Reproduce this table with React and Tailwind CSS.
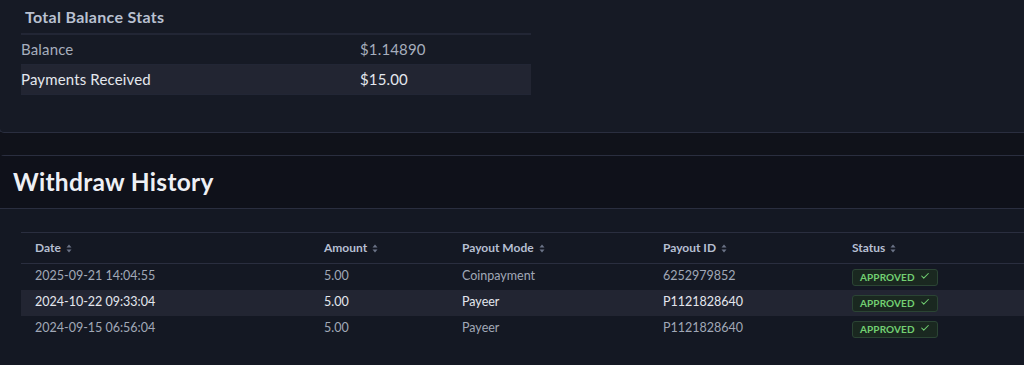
import React from 'react';
import { Check } from 'lucide-react';

const stats = [
  { label: 'Balance', value: '$1.14890' },
  { label: 'Payments Received', value: '$15.00' },
];

const withdrawals = [
  { date: '2025-09-21 14:04:55', amount: '5.00', mode: 'Coinpayment', id: '6252979852' },
  { date: '2024-10-22 09:33:04', amount: '5.00', mode: 'Payeer', id: 'P1121828640' },
  { date: '2024-09-15 06:56:04', amount: '5.00', mode: 'Payeer', id: 'P1121828640' },
];

const SortIcon = () => (
  <svg width="6" height="9" viewBox="0 0 6 9" className="ml-[5px] inline-block">
    <path d="M3 0.5 L5.5 3.5 H0.5 Z" fill="#6b7387" />
    <path d="M3 8.5 L5.5 5.5 H0.5 Z" fill="#6b7387" />
  </svg>
);

const cols = 'grid grid-cols-[289px_138px_201px_189px_1fr]';

const App = () => {
  return (
    <div className="w-[1024px] h-[365px] overflow-hidden bg-[#10121a] font-['Lato','Noto_Sans',sans-serif]">
      {/* Total Balance Stats card */}
      <div className="h-[133px] bg-[#161a25] border-b border-l border-[#2a2e3f] rounded-bl-[5px] -ml-px">
        <h3 className="pl-[25px] pt-[5px] h-[33px] text-[16px] font-bold tracking-[0.3px] text-[#b9c1d1]">Total Balance Stats</h3>
        <div className="ml-[21px] w-[510px] border-t-2 border-[#222635]">
          {stats.map((s, i) => (
            <div
              key={s.label}
              className={`grid grid-cols-[339px_1fr] h-[30px] items-center text-[15px] tracking-[0.15px] border-b border-[#222635] ${
                i % 2 === 1 ? 'bg-[#222532] text-[#e4e7ee]' : 'text-[#a6aebd]'
              }`}
            >
              <span>{s.label}</span>
              <span>{s.value}</span>
            </div>
          ))}
        </div>
      </div>

      {/* Withdraw History card */}
      <div className="mt-[22px] border-t border-l border-[#2a2e3f] rounded-tl-[5px] -ml-px">
        <div className="h-[53px] flex items-center pl-[13px] border-b border-[#2a2e3f] bg-[#0f111a]">
          <h2 className="text-[24.5px] font-bold tracking-[0.3px] text-[#eef0f5]">Withdraw History</h2>
        </div>
        <div className="bg-[#141823] pt-[23px] pl-[21px] h-[160px]">
          <div className="border-t border-[#2a2e3f]">
            <div className={`${cols} h-[31px] items-center border-b border-[#2a2e3f] text-[12px] font-bold text-[#b6bfd2]`}>
              <span className="pl-[14px] flex items-center">Date<SortIcon /></span>
              <span className="pl-[14px] flex items-center">Amount<SortIcon /></span>
              <span className="pl-[14px] flex items-center">Payout Mode<SortIcon /></span>
              <span className="pl-[14px] flex items-center">Payout ID<SortIcon /></span>
              <span className="pl-[14px] flex items-center">Status<SortIcon /></span>
            </div>
            {withdrawals.map((w, i) => (
              <div
                key={w.date}
                className={`${cols} h-[26px] items-center border-b text-[12.5px] ${
                  i % 2 === 1 ? 'bg-[#222532] text-[#e4e7ee] border-[#222532]' : 'text-[#a1a8b7] border-transparent'
                } ${i === withdrawals.length - 1 ? 'border-[#2a2e3f]' : ''}`}
              >
                <span className="pl-[14px]">{w.date}</span>
                <span className="pl-[14px]">{w.amount}</span>
                <span className="pl-[14px]">{w.mode}</span>
                <span className="pl-[14px]">{w.id}</span>
                <span className="pl-[14px] flex items-center">
                  <span className="inline-flex items-center h-[17px] mt-[1px] pl-[7px] pr-[7px] gap-[5px] rounded-[3px] border border-[#2b4434] bg-[#1a2820] text-[10px] font-bold tracking-[0.1px] text-[#72d072]">
                    APPROVED
                    <Check size={10} strokeWidth={2.5} className="text-[#72d072] -mt-[2px]" />
                  </span>
                </span>
              </div>
            ))}
          </div>
        </div>
      </div>
    </div>
  );
};

export default App;
